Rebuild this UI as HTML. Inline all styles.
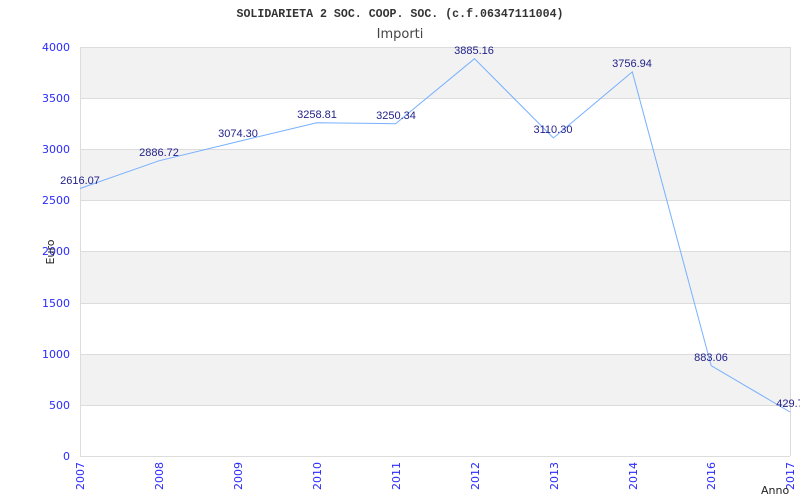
<!DOCTYPE html>
<html><head><style>body{margin:0;background:#fff;}svg{display:block}</style></head><body>
<svg width="800" height="500" xmlns="http://www.w3.org/2000/svg">
<rect width="800" height="500" fill="#fff"/>
<g fill="#f2f2f2">
<rect x="80" y="47" width="710" height="51"/>
<rect x="80" y="149" width="710" height="51"/>
<rect x="80" y="251" width="710" height="52"/>
<rect x="80" y="354" width="710" height="51"/>
</g>
<g stroke="#dcdcdc" stroke-width="1">
<line x1="80" y1="47.5" x2="790" y2="47.5"/>
<line x1="80" y1="98.5" x2="790" y2="98.5"/>
<line x1="80" y1="149.5" x2="790" y2="149.5"/>
<line x1="80" y1="200.5" x2="790" y2="200.5"/>
<line x1="80" y1="251.5" x2="790" y2="251.5"/>
<line x1="80" y1="303.5" x2="790" y2="303.5"/>
<line x1="80" y1="354.5" x2="790" y2="354.5"/>
<line x1="80" y1="405.5" x2="790" y2="405.5"/>
<line x1="80" y1="456.5" x2="790" y2="456.5"/>
<line x1="80.5" y1="47" x2="80.5" y2="456"/>
<line x1="790.5" y1="47" x2="790.5" y2="456"/>
</g>
<text x="400" y="17" text-anchor="middle" font-family="Liberation Mono,monospace" font-weight="bold" font-size="11.6" fill="#333">SOLIDARIETA 2 SOC. COOP. SOC. (c.f.06347111004)</text>
<text x="400" y="38" text-anchor="middle" font-family="DejaVu Sans,sans-serif" font-size="13" fill="#444">Importi</text>
<g font-family="DejaVu Sans,sans-serif" font-size="11" fill="#2a2aff" text-anchor="end">
<text x="70" y="51">4000</text><text x="70" y="102">3500</text><text x="70" y="153">3000</text><text x="70" y="204">2500</text><text x="70" y="255">2000</text><text x="70" y="307">1500</text><text x="70" y="358">1000</text><text x="70" y="409">500</text><text x="70" y="460">0</text>
</g>
<g font-family="DejaVu Sans,sans-serif" font-size="11" fill="#2a2aff" text-anchor="end">
<text transform="translate(84,462) rotate(-90)">2007</text>
<text transform="translate(163,462) rotate(-90)">2008</text>
<text transform="translate(242,462) rotate(-90)">2009</text>
<text transform="translate(321,462) rotate(-90)">2010</text>
<text transform="translate(400,462) rotate(-90)">2011</text>
<text transform="translate(479,462) rotate(-90)">2012</text>
<text transform="translate(558,462) rotate(-90)">2013</text>
<text transform="translate(637,462) rotate(-90)">2014</text>
<text transform="translate(715,462) rotate(-90)">2016</text>
<text transform="translate(794,462) rotate(-90)">2017</text>
</g>
<text transform="translate(54,252) rotate(-90)" text-anchor="middle" font-family="DejaVu Sans,sans-serif" font-size="11" fill="#222">Euro</text>
<text x="761" y="494" font-family="DejaVu Sans,sans-serif" font-size="11" fill="#222">Anno</text>
<polyline fill="none" stroke="#77b0ff" stroke-width="1" points="80,188.5 158.9,160.8 237.8,141.6 316.7,122.8 395.6,123.7 474.5,58.7 553.4,138 632.3,71.9 711.2,365.7 790,412"/>
<g font-family="Liberation Sans,Arial,sans-serif" font-size="11" fill="#22228a" text-anchor="middle">
<text x="80" y="184">2616.07</text>
<text x="159" y="156">2886.72</text>
<text x="238" y="137">3074.30</text>
<text x="317" y="118">3258.81</text>
<text x="396" y="119">3250.34</text>
<text x="474" y="54">3885.16</text>
<text x="553" y="133">3110.30</text>
<text x="632" y="67">3756.94</text>
<text x="711" y="361">883.06</text>
<text x="790" y="407">429.7</text>
</g>
</svg>
</body></html>
